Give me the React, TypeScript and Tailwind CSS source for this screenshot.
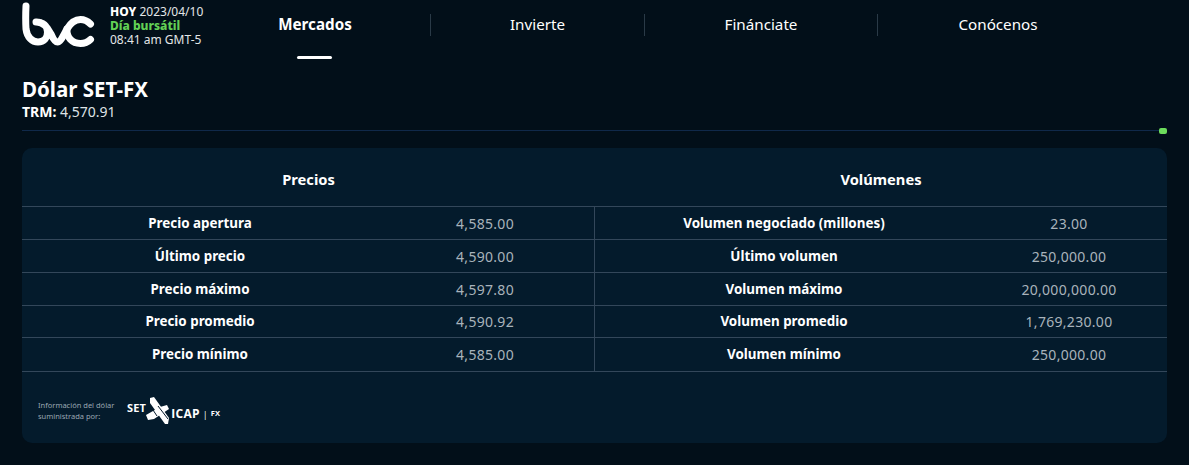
const font = { fontFamily: '"Noto Sans", "Open Sans", sans-serif' };

function Logo() {
  return (
    <svg width="74" height="46" viewBox="0 0 74 46" className="shrink-0" fill="none" stroke="#fff" strokeWidth="7" strokeLinecap="round" strokeLinejoin="round">
      <path d="M4 5 C3.6 13 3.6 21 4 28 C5 36 10 41 16 41 C22 41 25.5 36.5 25.5 31 C25.5 25 21 21 14 21 C22 20.5 26 27 29 33 C31 37.5 33 41 35.5 41 C38.5 41 41 35 45 28 C48.5 22 53 18.5 58.5 18.5 C62.5 18.5 66 20.5 68.5 23" />
      <path d="M68.5 38.5 C66 41 62.5 42.5 58.5 42.5 C50 42.5 44.5 36.5 45 28" />
    </svg>
  );
}

function SetIcap() {
  return (
    <div className="flex items-center text-white font-bold ml-[39px]" style={{ fontFamily: '"Open Sans", sans-serif' }}>
      <span className="text-[11px] leading-none mb-[8px] tracking-[0.2px]">SET</span>
      <svg width="27" height="28" viewBox="0 0 27 28" className="-ml-[1px]" fill="#fff">
        <polygon points="5,1 9,0 24,21 23,27 20,27 5,6" />
        <polygon points="1,18 15,10 22,8 24,12 9,22 3,23" />
        <path d="M13 9 L23 22 M8 13 L12 19" stroke="#041a2c" strokeWidth="1" fill="none" />
      </svg>
      <span className="text-[12px] leading-none mt-[6px] -ml-[1px] tracking-[0.3px]">ICAP</span>
      <span className="text-[9px] leading-none mt-[6px] ml-[3px] font-normal">|</span>
      <span className="text-[7.5px] leading-none mt-[6px] ml-[3px]">FX</span>
    </div>
  );
}

const left = [
  ["Precio apertura", "4,585.00"],
  ["Último precio", "4,590.00"],
  ["Precio máximo", "4,597.80"],
  ["Precio promedio", "4,590.92"],
  ["Precio mínimo", "4,585.00"],
];
const right = [
  ["Volumen negociado (millones)", "23.00"],
  ["Último volumen", "250,000.00"],
  ["Volumen máximo", "20,000,000.00"],
  ["Volumen promedio", "1,769,230.00"],
  ["Volumen mínimo", "250,000.00"],
];

function Row({ label, value, side }: { label: string; value: string; side: "l" | "r" }) {
  return (
    <div className="flex h-full items-center">
      <div className={side === "l" ? "w-[356px] text-center text-[13.4px] font-bold text-white" : "w-[378px] text-center text-[13.4px] font-bold text-white"}>{label}</div>
      <div className={side === "l" ? "w-[214px] text-center text-[14px] text-[#a9b3bb] tracking-[0.3px]" : "w-[192px] text-center text-[14px] text-[#a9b3bb] tracking-[0.3px]"}>{value}</div>
    </div>
  );
}

export default function App() {
  return (
    <div className="w-[1189px] h-[465px] overflow-hidden bg-[#020f19] text-white" style={font}>
      <header className="flex h-[62px]">
        <div className="w-[204px] pl-[22px] pt-[1px] flex items-start gap-[14px]">
          <Logo />
          <div className="text-[12px] leading-[14px] text-[#e3e6e8] pt-[4px] whitespace-nowrap">
            <div><b className="font-extrabold text-white">HOY</b> 2023/04/10</div>
            <div className="font-extrabold text-[#62d155]">Día bursátil</div>
            <div>08:41 am GMT-5</div>
          </div>
        </div>
        <nav className="flex text-[15.2px] text-white">
          <div className="relative w-[222px] mr-[4px] flex justify-center pt-[13px]">
            <span className="font-bold">Mercados</span>
            <span className="absolute left-[93px] top-[56px] w-[35px] h-[3px] rounded-full bg-white" />
          </div>
          <div className="w-px h-[22px] mt-[14px] bg-[#2a3a47]" />
          <div className="w-[213px] flex justify-center pt-[13px]">Invierte</div>
          <div className="w-px h-[22px] mt-[14px] bg-[#2a3a47]" />
          <div className="w-[232px] flex justify-center pt-[13px]">Finánciate</div>
          <div className="w-px h-[22px] mt-[14px] bg-[#2a3a47]" />
          <div className="w-[240px] flex justify-center pt-[13px]">Conócenos</div>
        </nav>
      </header>

      <main className="px-[22px]">
        <h1 className="text-[20.5px] leading-[26px] font-bold mt-[14px]">Dólar SET-FX</h1>
        <p className="text-[14px] leading-[18px] text-[#dfe3e6] mt-[1px]"><b className="font-bold text-white">TRM:</b> 4,570.91</p>

        <div className="relative h-px bg-[#10294a] mt-[9px]">
          <div className="absolute right-0 -top-[2px] w-[8px] h-[6px] rounded-[2px] bg-[#6cdc5c]" />
        </div>

        <section className="mt-[17px] h-[295px] rounded-[10px] bg-[#041b2c]">
          <div className="flex h-[58px] items-center pt-[4px] text-[14.7px] font-bold">
            <div className="w-[573px] text-center">Precios</div>
            <div className="flex-1 text-center">Volúmenes</div>
          </div>
          <div className="grid grid-cols-[573px_572px] grid-rows-[33px_33px_33px_32px_33px] border-t border-b border-[#33475a] h-[166px]">
            {left.map((l, i) => (
              <div key={l[0]} className="contents">
                <div className={i < 4 ? "border-r border-b border-[#33475a]" : "border-r border-[#33475a]"}>
                  <Row label={l[0]} value={l[1]} side="l" />
                </div>
                <div className={i < 4 ? "border-b border-[#33475a]" : ""}>
                  <Row label={right[i][0]} value={right[i][1]} side="r" />
                </div>
              </div>
            ))}
          </div>
          <div className="flex items-start pl-[16px] pt-[25px]">
            <p className="text-[7.5px] leading-[11px] text-[#9aa7b2] w-[50px] mt-[3px] whitespace-nowrap">Información del dólar<br />suministrada por:</p>
            <SetIcap />
          </div>
        </section>
      </main>
    </div>
  );
}
